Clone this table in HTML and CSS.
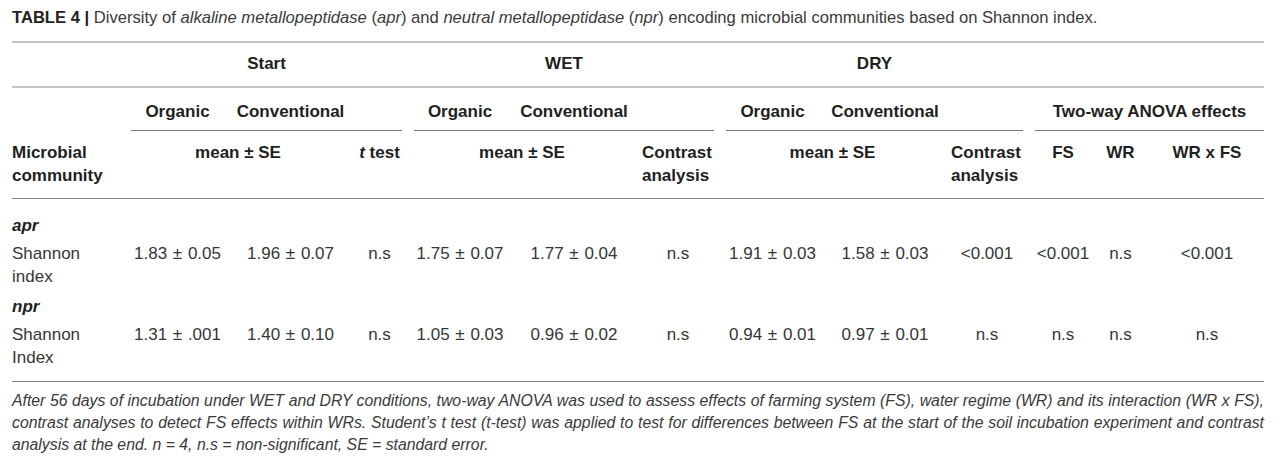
FILE: index.html
```html
<!DOCTYPE html>
<html lang="en">
<head>
<meta charset="utf-8">
<title>Table 4</title>
<link rel="stylesheet" href="styles.css">
</head>
<body>
<div class="page">
  <p class="caption"><b>TABLE 4 |</b> Diversity of <i>alkaline metallopeptidase</i> (<i>apr</i>) and <i>neutral metallopeptidase</i> (<i>npr</i>) encoding microbial communities based on Shannon index.</p>

  <div class="table">
    <div class="grid groups">
      <div class="h g-start">Start</div>
      <div class="h g-wet">WET</div>
      <div class="h g-dry">DRY</div>
    </div>

    <div class="grid subs">
      <div class="ul g-start"></div>
      <div class="ul g-wet"></div>
      <div class="ul g-dry"></div>
      <div class="ul g-anova"></div>
      <div class="h c2">Organic</div>
      <div class="h c3">Conventional</div>
      <div class="h c5">Organic</div>
      <div class="h c6">Conventional</div>
      <div class="h c8">Organic</div>
      <div class="h c9">Conventional</div>
      <div class="h g-anova">Two-way ANOVA effects</div>
    </div>

    <div class="grid cols">
      <div class="h left c1">Microbial<br>community</div>
      <div class="h span-start">mean ± SE</div>
      <div class="h c4"><i>t</i> test</div>
      <div class="h span-wet">mean ± SE</div>
      <div class="h left c7">Contrast<br>analysis</div>
      <div class="h span-dry">mean ± SE</div>
      <div class="h left c10">Contrast<br>analysis</div>
      <div class="h c11">FS</div>
      <div class="h c12">WR</div>
      <div class="h c13">WR x FS</div>
    </div>

    <div class="tbody">
      <div class="cat"><i>apr</i></div>
      <div class="grid data">
        <div class="d left">Shannon<br>index</div>
        <div class="d">1.83 ± 0.05</div>
        <div class="d">1.96 ± 0.07</div>
        <div class="d">n.s</div>
        <div class="d">1.75 ± 0.07</div>
        <div class="d">1.77 ± 0.04</div>
        <div class="d">n.s</div>
        <div class="d">1.91 ± 0.03</div>
        <div class="d">1.58 ± 0.03</div>
        <div class="d">&lt;0.001</div>
        <div class="d">&lt;0.001</div>
        <div class="d">n.s</div>
        <div class="d">&lt;0.001</div>
      </div>
      <div class="cat"><i>npr</i></div>
      <div class="grid data">
        <div class="d left">Shannon<br>Index</div>
        <div class="d">1.31 ± .001</div>
        <div class="d">1.40 ± 0.10</div>
        <div class="d">n.s</div>
        <div class="d">1.05 ± 0.03</div>
        <div class="d">0.96 ± 0.02</div>
        <div class="d">n.s</div>
        <div class="d">0.94 ± 0.01</div>
        <div class="d">0.97 ± 0.01</div>
        <div class="d">n.s</div>
        <div class="d">n.s</div>
        <div class="d">n.s</div>
        <div class="d">n.s</div>
      </div>
    </div>
  </div>

  <div class="foot">
    <span class="jl">After 56 days of incubation under WET and DRY conditions, two-way ANOVA was used to assess effects of farming system (FS), water regime (WR) and its interaction (WR x FS),</span>
    <span class="jl">contrast analyses to detect FS effects within WRs. Student’s t test (t-test) was applied to test for differences between FS at the start of the soil incubation experiment and contrast</span>
    <span class="ll">analysis at the end. <i>n</i> = 4, n.s = non-significant, SE = standard error.</span>
  </div>
</div>
</body>
</html>
```

FILE: styles.css
```css
html, body {
  margin: 0;
  padding: 0;
  background: #ffffff;
}

body {
  font-family: "Liberation Sans", Arial, Helvetica, sans-serif;
  color: #333333;
}

.page {
  width: 1252px;
  padding: 8px 12px 0 12px;
}

.caption {
  margin: 0 0 13px 0;
  font-size: 16.6px;
  line-height: 20px;
  color: #3a3a3a;
  white-space: nowrap;
}

.caption b {
  color: #222222;
}

.grid {
  display: grid;
  grid-template-columns: 107px 93px 109px 45px 92px 112px 72px 93px 108px 72px 56px 35px 114px;
  column-gap: 12px;
}

.h {
  font-weight: bold;
  font-size: 17px;
  line-height: 23px;
  color: #1f1f1f;
  text-align: center;
  white-space: nowrap;
}

.left {
  text-align: left;
}

.groups {
  border-top: 2px solid #c4c4c4;
  border-bottom: 2px solid #c4c4c4;
  padding: 9px 0 11px 0;
}

.subs {
  grid-template-rows: 43px;
}

.subs > * {
  grid-row: 1;
}

.subs .h {
  padding-top: 12px;
}

.ul {
  border-bottom: 1px solid #7a7a7a;
}

.cols {
  padding: 10px 0 11px 0;
  border-bottom: 1px solid #8a8a8a;
}

.g-start { grid-column: 2 / 5; }
.g-wet { grid-column: 5 / 8; }
.g-dry { grid-column: 8 / 11; }
.g-anova { grid-column: 11 / 14; }
.span-start { grid-column: 2 / 4; }
.span-wet { grid-column: 5 / 7; }
.span-dry { grid-column: 8 / 10; }

.c1 { grid-column: 1; }
.c2 { grid-column: 2; }
.c3 { grid-column: 3; }
.c4 { grid-column: 4; }
.c5 { grid-column: 5; }
.c6 { grid-column: 6; }
.c7 { grid-column: 7; }
.c8 { grid-column: 8; }
.c9 { grid-column: 9; }
.c10 { grid-column: 10; }
.c11 { grid-column: 11; }
.c12 { grid-column: 12; }
.c13 { grid-column: 13; }

.tbody {
  padding: 10px 0;
  border-bottom: 1px solid #8a8a8a;
  font-size: 17px;
  line-height: 23px;
}

.cat {
  font-weight: bold;
  color: #1f1f1f;
  padding: 5px 0 5px 0;
}

.data {
  padding-bottom: 2px;
}

.d {
  text-align: center;
  white-space: nowrap;
  color: #363636;
  word-spacing: 1px;
}

.d.left {
  text-align: left;
  word-spacing: 0;
}

.foot {
  margin-top: 8px;
  font-style: italic;
  font-size: 15.8px;
  line-height: 22px;
  color: #3a3a3a;
}

.foot span {
  display: block;
}

.foot .jl {
  text-align: justify;
  text-align-last: justify;
}

.foot .ll {
  text-align: left;
}
```
